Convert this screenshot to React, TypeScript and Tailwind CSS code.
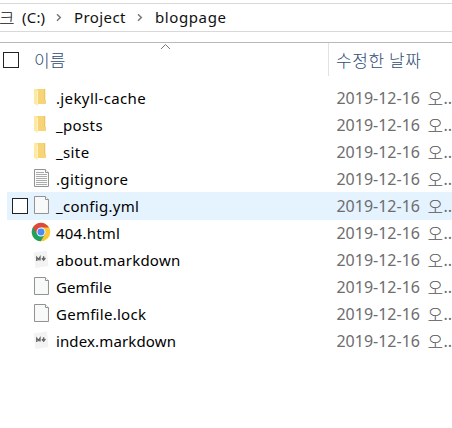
import React from "react";

type Kind = "folder" | "text" | "file" | "chrome" | "markdown";

const files: { name: string; kind: Kind; tracking: string; active?: boolean }[] = [
  { name: ".jekyll-cache", kind: "folder", tracking: "tracking-[0.39px]" },
  { name: "_posts", kind: "folder", tracking: "tracking-[0.38px]" },
  { name: "_site", kind: "folder", tracking: "tracking-[0.4px]" },
  { name: ".gitignore", kind: "text", tracking: "tracking-[0.4px]" },
  { name: "_config.yml", kind: "file", tracking: "tracking-[0.3px]", active: true },
  { name: "404.html", kind: "chrome", tracking: "tracking-[0.24px]" },
  { name: "about.markdown", kind: "markdown", tracking: "tracking-[0.24px]" },
  { name: "Gemfile", kind: "file", tracking: "tracking-[0.15px]" },
  { name: "Gemfile.lock", kind: "file", tracking: "tracking-[0.28px]" },
  { name: "index.markdown", kind: "markdown", tracking: "tracking-[0.14px]" },
];

function FileIcon({ kind }: { kind: Kind }) {
  if (kind === "folder")
    return (
      <svg className="mb-px" width="20" height="20" viewBox="0 0 20 20">
        <path d="M6 2H14V13H15V17H6Z" fill="#f6d477" />
        <path d="M13 2H14.3V13H13Z" fill="#eac564" />
        <path d="M3 2H6L7 4V19L3 16.5Z" fill="#ffe8a0" />
        <path d="M6.5 4V18" stroke="#fff3c5" strokeWidth="1" />
      </svg>
    );
  if (kind === "chrome")
    return (
      <svg className="mb-px" width="20" height="20" viewBox="0 0 20 20">
        <circle cx="10" cy="10" r="9.3" fill="#fcc934" />
        <path d="M10 10L1.95 5.35A9.3 9.3 0 0 0 9.8 19.3L14 12.3Z" fill="#1da260" />
        <path d="M1.95 5.35A9.3 9.3 0 0 1 18.05 5.6H10L6 12.3Z" fill="#db4a3f" />
        <circle cx="10" cy="10" r="4.5" fill="#f5f7fb" />
        <circle cx="10" cy="10" r="3.5" fill="#4c8bf5" />
      </svg>
    );
  if (kind === "markdown")
    return (
      <svg className="mb-px" width="20" height="20" viewBox="0 0 20 20">
        <path d="M2.5 3.5L16 1.5L17.5 17L4.5 19Z" fill="#f3f3f3" />
        <path d="M5.8 12V8.4L7.5 10.4L9 8.2V11.6" fill="none" stroke="#666" strokeWidth="1.4" />
        <path d="M12.6 7.2V11M10.9 9.2L12.7 11.2L14.4 8.9" fill="none" stroke="#666" strokeWidth="1.4" />
      </svg>
    );
  return (
    <svg className="mb-px" width="20" height="20" viewBox="0 0 20 20">
      <path d="M3.5 1.5H14L17.5 4.5V18.5H3.5Z" fill={kind === "text" ? "#fcfcfc" : "#f8f9f9"} stroke="#929292" />
      <path d="M14.5 1.5V4.5H17.5" fill="#fff" stroke="#929292" />
      {kind === "text" && (
        <path d="M5 4.5H13M5 6.5H16M5 8.5H16M5 10.5H16M5 12.5H16M5 14.5H16M5 16.5H16" stroke="#aaa" />
      )}
    </svg>
  );
}

function Separator() {
  return (
    <svg width="6" height="8" viewBox="0 0 6 8">
      <path d="M1 0.3L4.3 3.5L1 6.7" fill="none" stroke="#777" strokeWidth="1.5" />
    </svg>
  );
}

export default function App() {
  return (
    <div className="h-[428px] w-[452px] overflow-hidden bg-white pt-[3px] font-['Noto_Sans','Noto_Sans_CJK_KR',sans-serif] text-[15px] whitespace-nowrap text-black">
      <nav className="flex h-[29px] items-center border-y border-[#d9d9d9] text-[#111]">
        <span className="-ml-px w-4 font-['Noto_Sans_CJK_KR',sans-serif] text-[17px] font-light">크</span>
        <span className="ml-[7px] w-[34px] tracking-[0.2px]">(C:)</span>
        <Separator />
        <span className="ml-[12px] w-[63px] tracking-[0.4px]">Project</span>
        <Separator />
        <span className="ml-[12px] tracking-[0.6px]">blogpage</span>
      </nav>
      <header className="relative mt-[10px] flex h-[34px] border-t border-[#b9b9b9] font-['Noto_Sans_CJK_KR',sans-serif] text-[17px] font-light text-[#2f4c74]">
        <svg className="absolute top-0 left-[160px]" width="11" height="7" viewBox="0 0 11 7">
          <path d="M1 6L5.5 1.5L10 6" fill="none" stroke="#777" />
        </svg>
        <div className="flex w-[328px] items-center pl-[3px]">
          <span className="h-4 w-4 border border-[#222] bg-white" />
          <span className="ml-[15px]">이름</span>
        </div>
        <div className="flex grow items-center border-l border-[#e2e2e2] pl-[7px] tracking-[0.6px]">수정한 날짜</div>
      </header>
      <ul className="mt-2">
        {files.map((f) => (
          <li key={f.name} className={`ml-[7px] flex items-center ${f.active ? "-mb-px h-7 bg-[#e5f3ff] pb-px" : "h-[27px]"}`}>
            <span className="flex w-6 pl-[5px]">
              {f.active && <span className="h-4 w-4 border border-[#222] bg-white" />}
            </span>
            <FileIcon kind={f.kind} />
            <span className={`ml-[5px] w-[281px] pt-px ${f.tracking}`}>{f.name}</span>
            <span className="flex h-[22px] items-center text-[16px] leading-[22px] text-[#6d6d6d]">
              <span className="w-[91px]">2019-12-16</span>
              <span className="w-4 font-['Noto_Sans_CJK_KR',sans-serif] text-[17px] font-light text-[#555]">오</span>
              <span>..</span>
            </span>
          </li>
        ))}
      </ul>
    </div>
  );
}
